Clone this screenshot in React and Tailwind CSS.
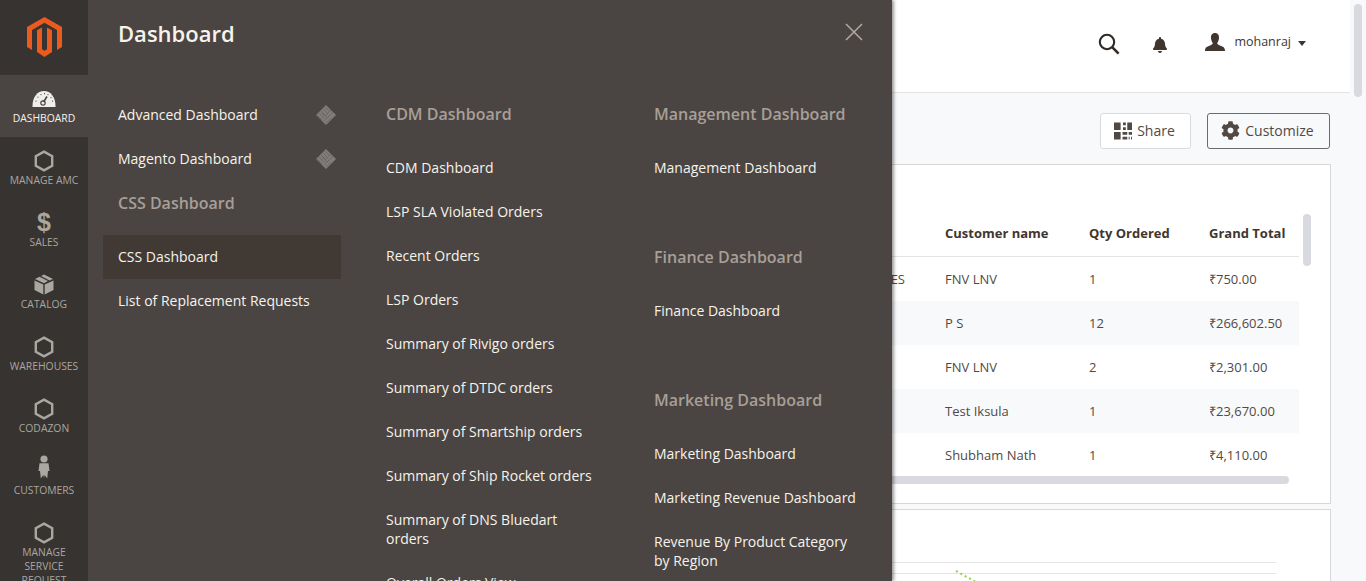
import React from "react";
import { FaBell, FaCog } from "react-icons/fa";

const Hex = () => (
  <svg width="20" height="22" viewBox="0 0 20 22" fill="none" stroke="#aaa6a0" strokeWidth="2.4">
    <path d="M10 1.6 L18.2 6.3 V15.7 L10 20.4 L1.8 15.7 V6.3 Z" />
  </svg>
);
const Gauge = () => (
  <svg width="24" height="18" viewBox="0 0 24 18">
    <path d="M0.5 16 C0.5 7 5.5 1 12 1 C18.5 1 23.5 7 23.5 16 V17 H0.5 Z" fill="#eeeeec" />
    <path d="M15 6.5 L11.5 12" stroke="#4a4542" strokeWidth="1.6" />
    <circle cx="11" cy="13" r="2.2" fill="none" stroke="#4a4542" strokeWidth="1.2" />
    <path d="M4 11v.1M6 7v.1M9 4.5v.1M12.5 3.6v.1M16 4.5v.1M19 7.5v.1M20.5 11v.1" stroke="#4a4542" strokeWidth="1.2" strokeLinecap="round" />
  </svg>
);
const Dollar = () => (
  <span className="text-[25px] leading-none font-bold text-[#aaa6a0] mt-[-2px]" style={{ fontFamily: "'Liberation Sans', sans-serif" }}>$</span>
);
const BoxIcon = () => (
  <svg width="20" height="21" viewBox="0 0 20 21" fill="#aaa6a0" className="mt-[-2px]">
    <path d="M0.5 6.5 L9.3 10.5 V20.5 L0.5 16 Z" />
    <path d="M10.7 10.5 L19.5 6.5 V16 L10.7 20.5 Z" />
    <path d="M1 5 L5.5 2.8 L14 7 L10 9.2 Z" />
    <path d="M7 2 L10 0.5 L19 5 L15.5 6.5 Z" />
  </svg>
);
const Person = () => (
  <svg width="12" height="24" viewBox="0 0 12 24" fill="#aaa6a0" className="mt-[-8px]">
    <circle cx="6" cy="4" r="3.6" />
    <path d="M1.5 8.2 H10.5 L11.5 16 H10 L9.2 23.5 L6.6 20 L6 23 L5.2 20 L2.8 23.5 L2 16 H0.5 Z" />
  </svg>
);
const Diamond = () => (
  <svg width="20" height="20" viewBox="0 0 20 20" className="shrink-0 -my-[4px] mr-[-10px]">
    <path d="M10 0 L20 10 L10 20 L0 10 Z" fill="#7f7c79" />
    <path d="M5 6 L10 11 M7 4 L12 9 M9 2 L14 7 M11 13 L6 8 M15 5 L10 10 M17 7 L12 12 M10 18 L15 13 M8 16 L13 11 M3 8 L8 13 M1 10 L6 15" stroke="#4a4542" strokeWidth="0.6" opacity="0.6" />
  </svg>
);

const nav = [
  { label: ["DASHBOARD"], icon: <Gauge />, active: true },
  { label: ["MANAGE AMC"], icon: <Hex /> },
  { label: ["SALES"], icon: <Dollar /> },
  { label: ["CATALOG"], icon: <BoxIcon /> },
  { label: ["WAREHOUSES"], icon: <Hex /> },
  { label: ["CODAZON"], icon: <Hex /> },
  { label: ["CUSTOMERS"], icon: <Person /> },
  { label: ["MANAGE", "SERVICE", "REQUEST"], icon: <Hex /> },
];

const Item = ({ children, active, icon }) => (
  <div className={`px-[15px] pt-[12px] pb-[13px] flex justify-between items-center text-[14px] leading-[19px] font-medium text-[#f7f3eb] ${active ? "bg-[#413a34]" : ""}`}>
    <span>{children}</span>
    {icon}
  </div>
);
const Heading = ({ children, className = "" }) => (
  <div className={`px-[15px] h-[44px] mb-[10px] flex items-center text-[16px] font-semibold text-[#a79f98] ${className}`}>{children}</div>
);

const rows = [
  ["ES", "FNV LNV", "1", "₹750.00"],
  ["", "P S", "12", "₹266,602.50"],
  ["", "FNV LNV", "2", "₹2,301.00"],
  ["", "Test Iksula", "1", "₹23,670.00"],
  ["", "Shubham Nath", "1", "₹4,110.00"],
];

const col = "grid grid-cols-[1fr_144px_120px_90px] items-center";

export default function App() {
  return (
    <div className="flex h-[581px] w-[1366px] overflow-hidden bg-white text-[#41362f]" style={{ fontFamily: "'Open Sans', sans-serif" }}>
      <aside className="w-[88px] shrink-0 bg-[#373330] z-20">
        <div className="h-[75px] flex items-center justify-center">
          <svg width="35" height="40" viewBox="0 0 35 40" fill="#eb5b20" className="mt-[-1px]">
            <path d="M17.5 0 L0 10 V30 L5 32.9 V13 L17.5 5.8 L30 13 V32.9 L35 30 V10 Z" />
            <path d="M10 13.2 L15 10.4 V32.2 L17.5 33.7 L20 32.2 V10.4 L25 13.2 V35.1 L17.5 40 L10 35.1 Z" />
          </svg>
        </div>
        {nav.map((n) => (
          <div key={n.label[0] + n.label.length} className={`h-[62px] pt-[12px] flex flex-col items-center text-center ${n.active ? "bg-[#4a4542] text-[#f7f3eb]" : "text-[#aaa6a0]"}`}>
            <div className="h-[24px] flex items-center justify-center shrink-0">{n.icon}</div>
            {n.label.map((l) => (
              <div key={l} className="text-[10.35px] leading-[14px] whitespace-nowrap">{l}</div>
            ))}
          </div>
        ))}
      </aside>

      <div className="relative flex-1 min-w-0">
        <header className="h-[93px] border-b border-[#e3e3e3] bg-white flex items-center justify-end pr-[44px] pb-[6px]">
          <svg width="22" height="22" viewBox="0 0 22 22" fill="none" stroke="#302a26" strokeWidth="2.1" className="mr-[32px] mt-[1px]">
            <circle cx="9" cy="9" r="7.2" />
            <path d="M14.2 14.2 L20.6 20.6" strokeWidth="2.6" />
          </svg>
          <FaBell className="text-[#41362f] text-[16px] mr-[37px] mt-[4px]" />
          <svg width="20" height="18" viewBox="0 0 20 18" fill="#41362f" className="mr-[9px] mb-[3px]">
            <path d="M10 0 C13 0 14.3 2.4 14 5.2 C13.8 7.2 13 9 12.2 10 C12.2 11.3 13.6 12 16 13 C18.5 14 20 14.6 20 18 H0 C0 14.6 1.5 14 4 13 C6.4 12 7.8 11.3 7.8 10 C7 9 6.2 7.2 6 5.2 C5.7 2.4 7 0 10 0 Z" />
          </svg>
          <span className="text-[12.5px] text-[#41362f] mr-[7px] mb-[2px]">mohanraj</span>
          <svg width="8" height="5" viewBox="0 0 8 5" fill="#41362f"><path d="M0 0 H8 L4 5 Z" /></svg>
        </header>

        <main className="bg-[#f8f9fb] h-[488px] pl-[20px] pr-[19px] pt-[20px]">
          <div className="flex justify-end gap-[16px] pr-[1px]">
            <button className="h-[36px] w-[91px] pr-[2px] pb-[1px] flex items-center justify-center gap-[5px] border border-[#d9dbdf] rounded-[3px] bg-white text-[14px] text-[#514943]">
              <svg width="18" height="18" viewBox="0 0 19 18" fill="#514943">
                <path d="M0 0h7v8H0zM9.5 0h3v3h-3zM14 0h5v8h-5zM9.5 5h3v3h-3zM0 10h7v8H0zM9 10h5v3H9zM15.5 10H19v3h-3.5zM9 15h5v3H9zM15.5 15h1v3h-1zM18 15h1v3h-1z" />
              </svg>
              Share
            </button>
            <button className="h-[36px] w-[123px] pr-[2px] pb-[1px] flex items-center justify-center gap-[5px] border border-[#6e6a67] rounded-[3px] bg-[#f8f9fb] text-[14px] text-[#514943]">
              <FaCog className="text-[19px]" />
              Customize
            </button>
          </div>

          <section className="relative mt-[15px] h-[340px] bg-white border border-[#d8d8d8] pt-[45px] pr-[31px]">
            <div className={`${col} h-[47px] pt-[2px] border-b border-[#e3e3e3] text-[13px] font-bold text-[#41362f]`}>
              <div /><div>Customer name</div><div>Qty Ordered</div><div>Grand Total</div>
            </div>
            {rows.map((r, i) => (
              <div key={i} className={`${col} h-[44px] pt-[2px] text-[13px] text-[#514943] ${i % 2 ? "bg-[#f8f9fb]" : "bg-white"}`}>
                <div className="text-right pr-[40px]">{r[0]}</div>
                <div>{r[1]}</div><div>{r[2]}</div><div>{r[3]}</div>
              </div>
            ))}
            <div className="absolute left-0 top-[311px] w-[1180px] h-[8px] rounded-full bg-[#d9dadf]" />
            <div className="absolute right-[19px] top-[49px] w-[8px] h-[52px] rounded-full bg-[#d9dadf]" />
          </section>

          <section className="mt-[5px] h-[100px] bg-white border border-[#d8d8d8]">
            <svg width="1221" height="72" viewBox="0 0 1221 72" fill="none" className="block">
              <path d="M30 52.5H1167M30 63.5H1167" stroke="#e5e5e5" />
              <path d="M847 61 L867 72" stroke="#8fd14f" strokeWidth="2" strokeDasharray="2 3" />
            </svg>
          </section>
        </main>

        <div className="absolute left-0 top-0 w-[804px] h-[581px] overflow-hidden bg-[#4a4542] shadow-[2px_0_3px_rgba(0,0,0,0.4)] z-10">
          <div className="flex items-start justify-between pl-[30px] pr-[29px] h-[92px]">
            <h1 className="text-[22px] leading-[30px] font-semibold text-[#f7f3eb] mt-[18px]">Dashboard</h1>
            <svg width="18" height="18" viewBox="0 0 18 18" stroke="#b3aca5" strokeWidth="1.5" className="mt-[23px]">
              <path d="M1 1 L17 17 M17 1 L1 17" />
            </svg>
          </div>
          <div className="flex gap-[30px] pl-[15px]">
            <div className="w-[238px] shrink-0 pt-[1px]">
              <Item icon={<Diamond />}>Advanced Dashboard</Item>
              <Item icon={<Diamond />}>Magento Dashboard</Item>
              <Heading>CSS Dashboard</Heading>
              <Item active>CSS Dashboard</Item>
              <Item>List of Replacement Requests</Item>
            </div>
            <div className="w-[238px] shrink-0">
              <Heading>CDM Dashboard</Heading>
              <Item>CDM Dashboard</Item>
              <Item>LSP SLA Violated Orders</Item>
              <Item>Recent Orders</Item>
              <Item>LSP Orders</Item>
              <Item>Summary of Rivigo orders</Item>
              <Item>Summary of DTDC orders</Item>
              <Item>Summary of Smartship orders</Item>
              <Item>Summary of Ship Rocket orders</Item>
              <Item>Summary of DNS Bluedart orders</Item>
              <Item>Overall Orders View</Item>
            </div>
            <div className="w-[238px] shrink-0">
              <Heading>Management Dashboard</Heading>
              <Item>Management Dashboard</Item>
              <Heading className="mt-[45px]">Finance Dashboard</Heading>
              <Item>Finance Dashboard</Item>
              <Heading className="mt-[45px]">Marketing Dashboard</Heading>
              <Item>Marketing Dashboard</Item>
              <Item>Marketing Revenue Dashboard</Item>
              <Item>Revenue By Product Category by Region</Item>
            </div>
          </div>
        </div>
      </div>

      <div className="w-[16px] shrink-0 bg-[#f8f9fb] pt-[4px] pl-[4px]">
        <div className="w-[8px] h-[93px] rounded-full bg-[#d9dadf]" />
      </div>
    </div>
  );
}
